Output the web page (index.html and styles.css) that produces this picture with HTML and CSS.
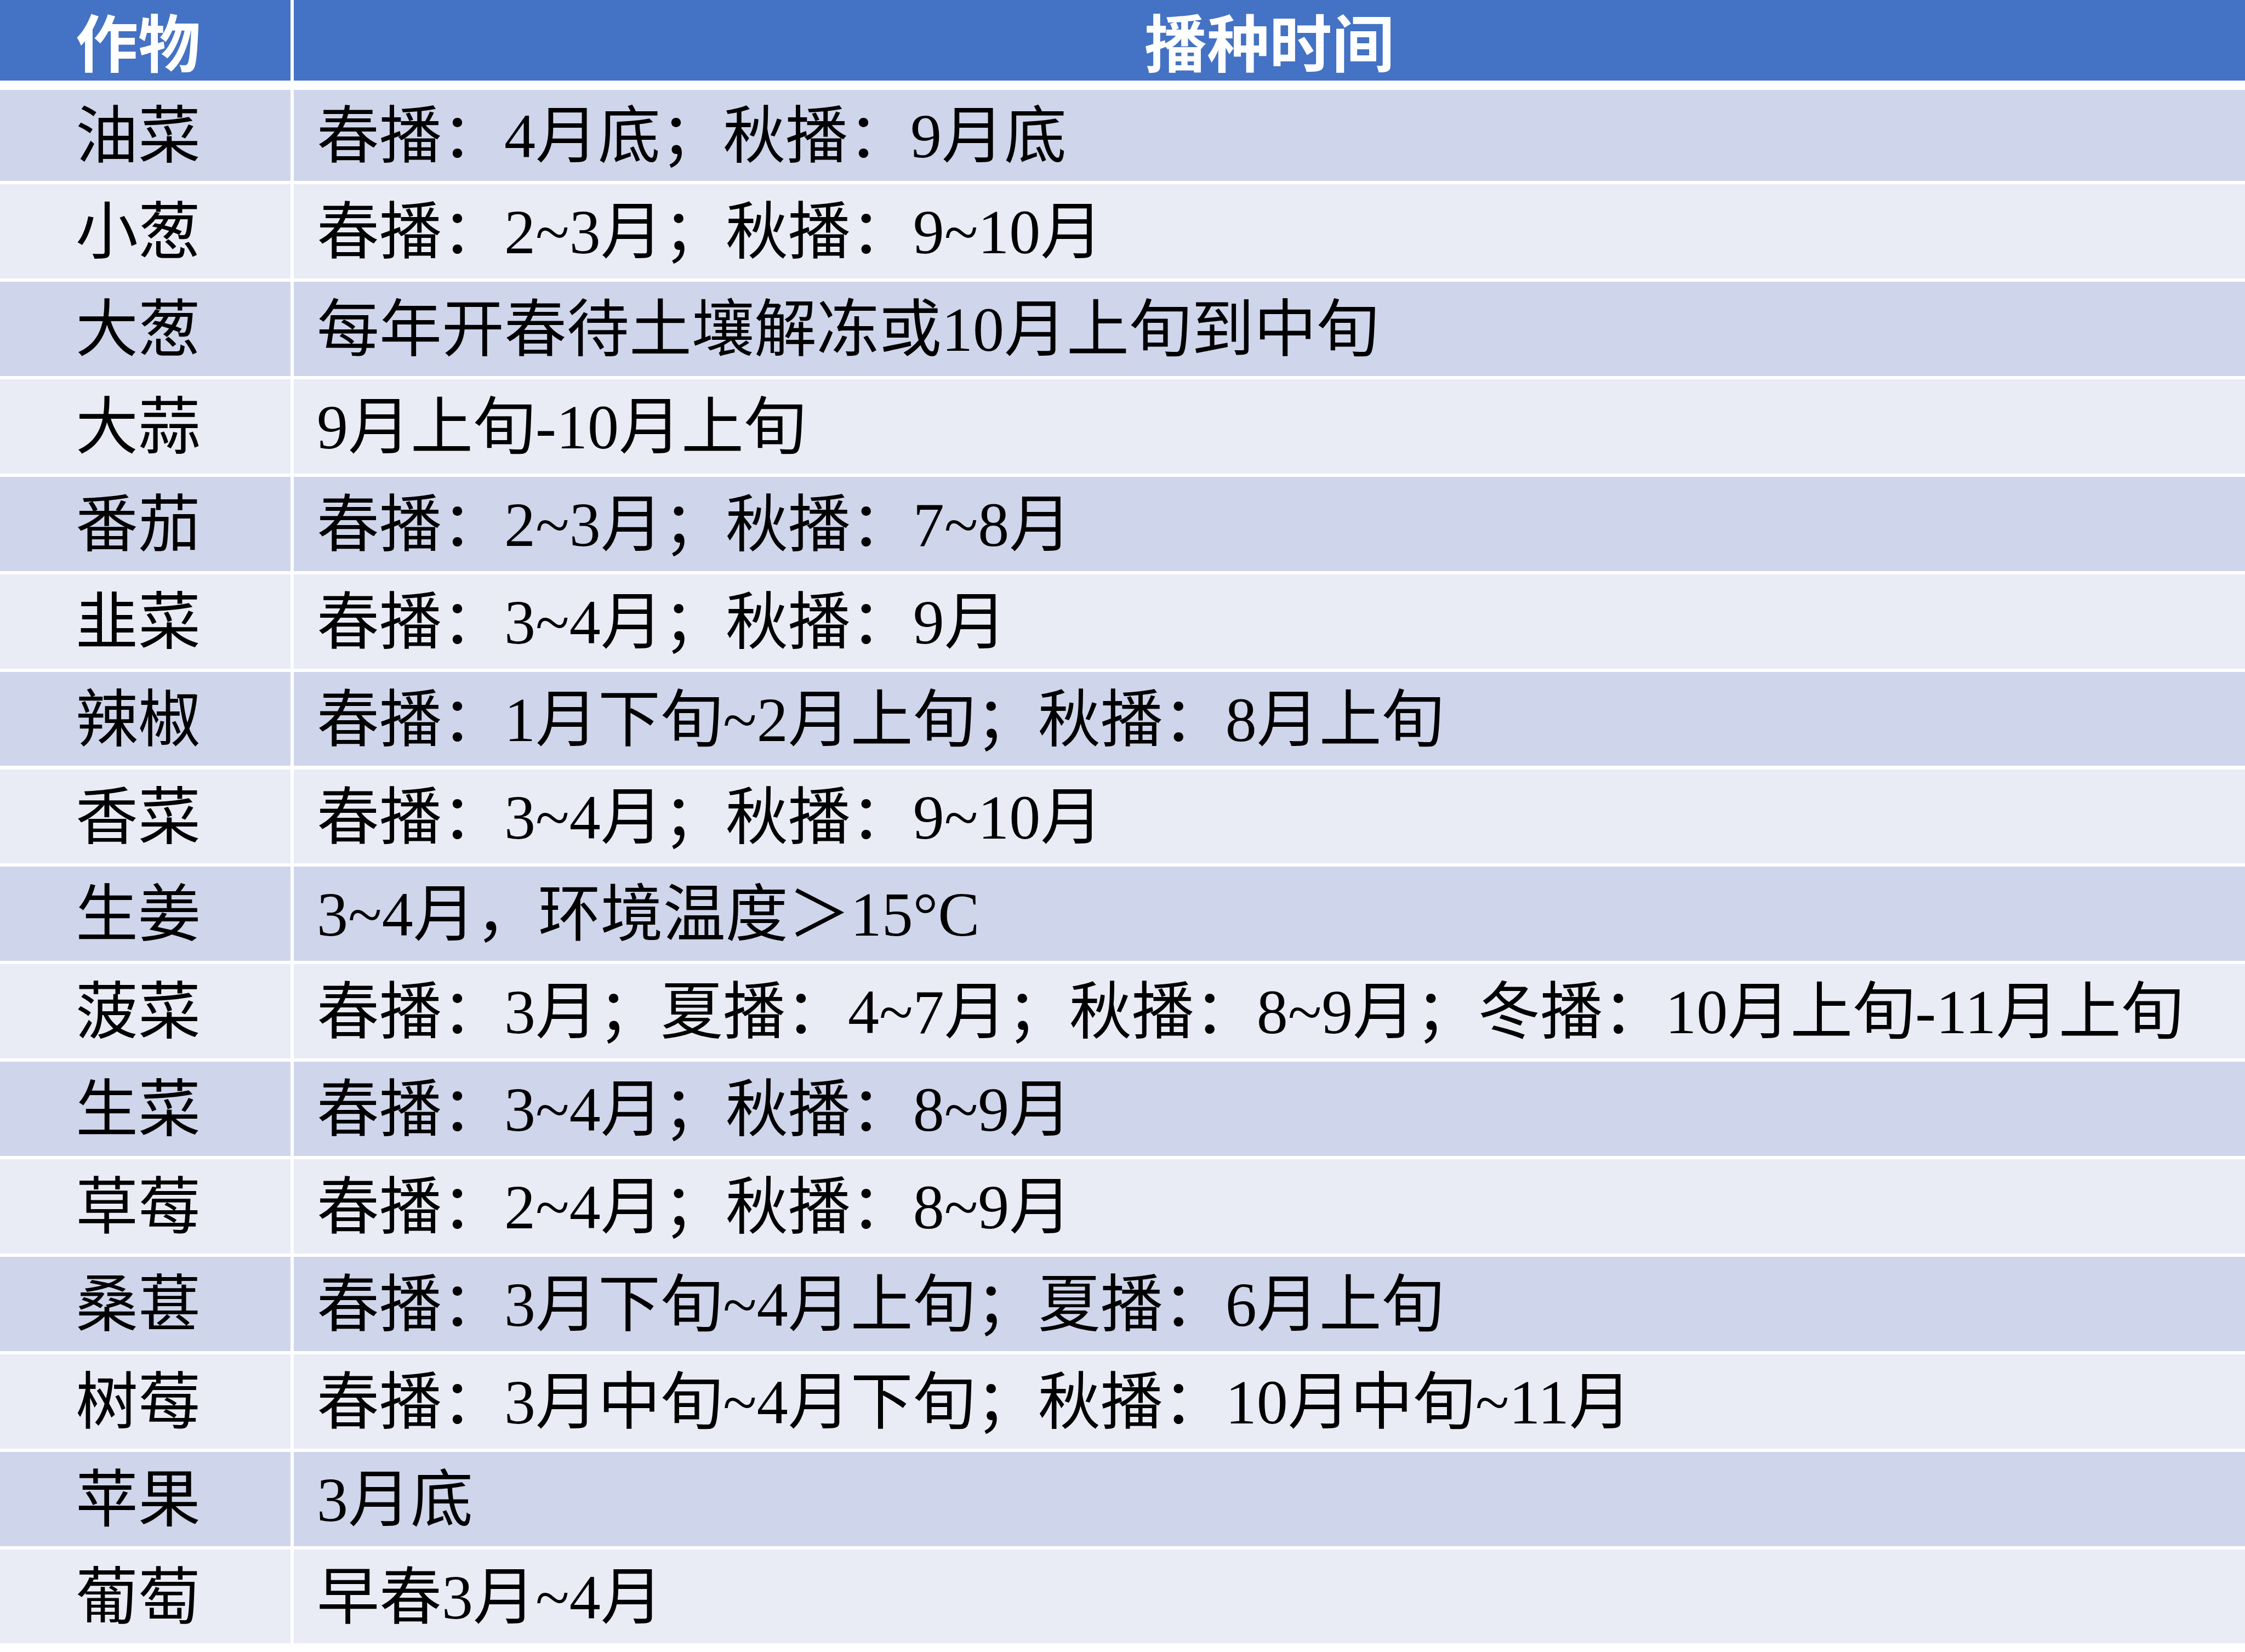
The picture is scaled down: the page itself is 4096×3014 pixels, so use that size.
FILE: index.html
```html
<!DOCTYPE html>
<html lang="zh-CN">
<head>
<meta charset="utf-8">
<title>播种时间</title>
<link rel="stylesheet" href="styles.css">
</head>
<body>
<div class="sheet">
  <div class="cell head crop">作物</div>
  <div class="cell head time">播种时间</div>

  <div class="cell band1 crop first">油菜</div>
  <div class="cell band1 time first">春播：4月底；秋播：9月底</div>

  <div class="cell band2 crop">小葱</div>
  <div class="cell band2 time">春播：2~3月；秋播：9~10月</div>

  <div class="cell band1 crop">大葱</div>
  <div class="cell band1 time">每年开春待土壤解冻或10月上旬到中旬</div>

  <div class="cell band2 crop">大蒜</div>
  <div class="cell band2 time">9月上旬-10月上旬</div>

  <div class="cell band1 crop">番茄</div>
  <div class="cell band1 time">春播：2~3月；秋播：7~8月</div>

  <div class="cell band2 crop">韭菜</div>
  <div class="cell band2 time">春播：3~4月；秋播：9月</div>

  <div class="cell band1 crop">辣椒</div>
  <div class="cell band1 time">春播：1月下旬~2月上旬；秋播：8月上旬</div>

  <div class="cell band2 crop">香菜</div>
  <div class="cell band2 time">春播：3~4月；秋播：9~10月</div>

  <div class="cell band1 crop">生姜</div>
  <div class="cell band1 time">3~4月，环境温度＞15°C</div>

  <div class="cell band2 crop">菠菜</div>
  <div class="cell band2 time">春播：3月；夏播：4~7月；秋播：8~9月；冬播：10月上旬-11月上旬</div>

  <div class="cell band1 crop">生菜</div>
  <div class="cell band1 time">春播：3~4月；秋播：8~9月</div>

  <div class="cell band2 crop">草莓</div>
  <div class="cell band2 time">春播：2~4月；秋播：8~9月</div>

  <div class="cell band1 crop">桑葚</div>
  <div class="cell band1 time">春播：3月下旬~4月上旬；夏播：6月上旬</div>

  <div class="cell band2 crop">树莓</div>
  <div class="cell band2 time">春播：3月中旬~4月下旬；秋播：10月中旬~11月</div>

  <div class="cell band1 crop">苹果</div>
  <div class="cell band1 time">3月底</div>

  <div class="cell band2 crop">葡萄</div>
  <div class="cell band2 time">早春3月~4月</div>
</div>
</body>
</html>
```

FILE: styles.css
```css
html, body {
  margin: 0;
  padding: 0;
  background: #ffffff;
}

.sheet {
  display: grid;
  grid-template-columns: 530px 1fr;
  grid-template-rows: 158px 166px repeat(15, 171.8px);
  column-gap: 6px;
  row-gap: 6.1px;
  width: 4096px;
  background: #ffffff;
  font-family: "Liberation Serif", "Noto Sans CJK SC", serif;
  font-size: 114px;
  line-height: 1.2;
  color: #000000;
}

.cell {
  display: flex;
  align-items: center;
  white-space: nowrap;
}

.band1,
.band2 {
  padding-top: 5px;
}

.head {
  background: #4472C4;
  color: #ffffff;
  font-family: "Noto Sans CJK SC", sans-serif;
  font-weight: 700;
  line-height: 1.2;
  margin-bottom: 11px;
}

.head.time {
  justify-content: center;
  padding-left: 0;
}

.band1 {
  background: #CFD5EA;
}

.band2 {
  background: #E9EBF5;
}

.crop {
  padding-left: 138px;
}

.time {
  padding-left: 42px;
}
```
